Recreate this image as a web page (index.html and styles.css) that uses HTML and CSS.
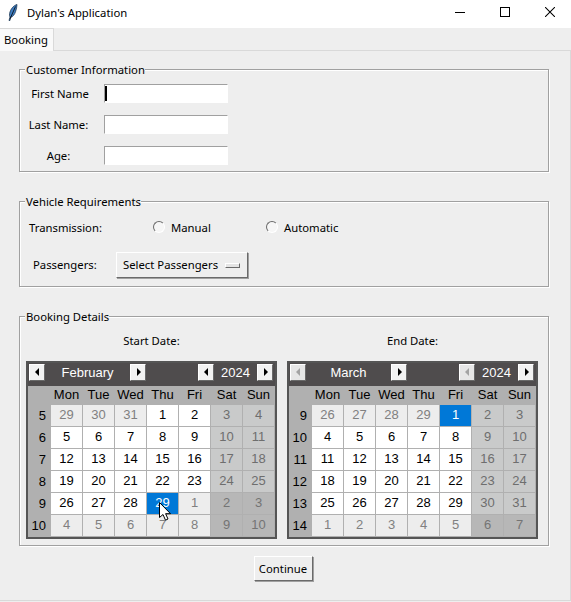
FILE: index.html
```html
<!DOCTYPE html>
<html lang="en">
<head>
  <meta charset="UTF-8" />
  <title>Dylan's Application</title>
  <link rel="stylesheet" href="styles.css">
</head>
<body>
  <div class="titlebar">
    <svg class="feather" width="10" height="17" viewBox="0 0 10 17">
      <path d="M9 0.5C5.5 1.5 2.5 5 1.6 9.5C1.3 11 1.5 12.3 2 13L1 16.5L1.8 16.7L2.9 13.2C5 12.6 6.6 10.6 7.6 7.5C8.4 5 9 2.5 9 0.5Z" fill="#3f7fc4" stroke="#10263f" stroke-width="0.7"/>
      <path d="M7.5 2.5L2.2 14.5" stroke="#000" stroke-width="0.8" fill="none"/>
    </svg>
    <span class="title">Dylan's Application</span>
    <div class="winbtns">
      <svg width="10" height="10" viewBox="0 0 10 10"><path d="M0 5.5H10" stroke="#000"/></svg>
      <svg width="10" height="10" viewBox="0 0 10 10"><rect x="0.5" y="0.5" width="9" height="9" fill="none" stroke="#000"/></svg>
      <svg width="10" height="10" viewBox="0 0 10 10"><path d="M0 0L10 10M10 0L0 10" stroke="#000" stroke-width="1.05"/></svg>
    </div>
  </div>

  <div class="tabs"><div class="tab">Booking</div></div>

  <div class="panel">
    <fieldset class="group customer">
      <legend>Customer Information</legend>
      <label class="first">First Name</label>
      <input type="text" class="focused" />
      <label>Last Name:</label>
      <input type="text" />
      <label>Age:</label>
      <input type="text" />
    </fieldset>

    <fieldset class="group vehicle">
      <legend>Vehicle Requirements</legend>
      <div class="row">
        <span class="trans-label">Transmission:</span>
        <span class="choice"><span class="radio"></span>Manual</span>
        <span class="choice"><span class="radio"></span>Automatic</span>
      </div>
      <div class="row passengers">
        <span class="pass-label">Passengers:</span>
        <div class="menubtn">Select Passengers<span class="indicator"></span></div>
      </div>
    </fieldset>

    <fieldset class="group booking">
      <legend>Booking Details</legend>
      <div class="dates">
        <div class="date-label">Start Date:</div>
        <div class="date-label">End Date:</div>

        <div class="cal">
          <div class="cal-head">
            <span class="arrow left"></span>
            <span class="month">February</span>
            <span class="arrow right"></span>
            <span class="arrow left push"></span>
            <span class="year">2024</span>
            <span class="arrow right"></span>
          </div>
          <div class="cal-body">
            <b></b><b>Mon</b><b>Tue</b><b>Wed</b><b>Thu</b><b>Fri</b><b>Sat</b><b>Sun</b>
            <i>5</i><span class="o">29</span><span class="o">30</span><span class="o">31</span><span>1</span><span>2</span><span class="w">3</span><span class="w">4</span>
            <i>6</i><span>5</span><span>6</span><span>7</span><span>8</span><span>9</span><span class="w">10</span><span class="w">11</span>
            <i>7</i><span>12</span><span>13</span><span>14</span><span>15</span><span>16</span><span class="w">17</span><span class="w">18</span>
            <i>8</i><span>19</span><span>20</span><span>21</span><span>22</span><span>23</span><span class="w">24</span><span class="w">25</span>
            <i>9</i><span>26</span><span>27</span><span>28</span><span class="sel">29</span><span class="o">1</span><span class="ow">2</span><span class="ow">3</span>
            <i>10</i><span class="o">4</span><span class="o">5</span><span class="o">6</span><span class="o">7</span><span class="o">8</span><span class="ow">9</span><span class="ow">10</span>
          </div>
          <svg class="pointer" width="13" height="19" viewBox="0 0 13 19">
            <path d="M0.5 0.5V15.5L4 12.5L6.5 18.2L9 17L6.6 11.7H11.5Z" fill="#fff" stroke="#000" stroke-width="1"/>
          </svg>
        </div>

        <div class="cal wide">
          <div class="cal-head">
            <span class="arrow left off"></span>
            <span class="month">March</span>
            <span class="arrow right"></span>
            <span class="arrow left off push"></span>
            <span class="year">2024</span>
            <span class="arrow right"></span>
          </div>
          <div class="cal-body">
            <b></b><b>Mon</b><b>Tue</b><b>Wed</b><b>Thu</b><b>Fri</b><b>Sat</b><b>Sun</b>
            <i>9</i><span class="o">26</span><span class="o">27</span><span class="o">28</span><span class="o">29</span><span class="sel">1</span><span class="w">2</span><span class="w">3</span>
            <i>10</i><span>4</span><span>5</span><span>6</span><span>7</span><span>8</span><span class="w">9</span><span class="w">10</span>
            <i>11</i><span>11</span><span>12</span><span>13</span><span>14</span><span>15</span><span class="w">16</span><span class="w">17</span>
            <i>12</i><span>18</span><span>19</span><span>20</span><span>21</span><span>22</span><span class="w">23</span><span class="w">24</span>
            <i>13</i><span>25</span><span>26</span><span>27</span><span>28</span><span>29</span><span class="w">30</span><span class="w">31</span>
            <i>14</i><span class="o">1</span><span class="o">2</span><span class="o">3</span><span class="o">4</span><span class="o">5</span><span class="ow">6</span><span class="ow">7</span>
          </div>
        </div>
      </div>
    </fieldset>

    <div class="actions"><button class="continue">Continue</button></div>
  </div>
</body>
</html>
```

FILE: styles.css
```css
* {
  box-sizing: border-box;
}
html, body {
  height: 100%;
}
body {
  margin: 0;
  width: 571px;
  height: 602px;
  overflow: hidden;
  background: #eeeeee;
  color: #000;
  font-family: "Noto Sans", sans-serif;
  font-size: 11.3px;
  line-height: 16px;
}

/* window title */
.titlebar {
  display: flex;
  align-items: center;
  height: 28px;
  padding-left: 8px;
  background: #fff;
}
.feather {
  margin-right: 9px;
  margin-top: -3px;
}
.title {
  margin-top: -2px;
}
.winbtns {
  display: flex;
  gap: 35px;
  margin-left: auto;
  margin-right: 16px;
  margin-top: -4px;
}

/* notebook */
.tabs {
  height: 23px;
  border-bottom: 1px solid #d9d9d9;
}
.tab {
  width: 54px;
  height: 23px;
  padding: 3px 0 0 4px;
  background: #f9f9f9;
  border: 1px solid #d9d9d9;
  border-width: 1px 1px 0 0;
}
.panel {
  height: 550px;
  padding: 11px 22px 0 19px;
  border-right: 1px solid #d9d9d9;
  border-bottom: 1px solid #d9d9d9;
  margin-bottom: 1px;
}

/* label frames */
.group {
  margin: 0;
  width: 530px;
  min-width: 0;
  padding: 0;
  border: 1px solid #a0a0a0;
  box-shadow: 1px 1px 0 #fff, inset 1px 1px 0 #fff;
}
.group legend {
  margin-left: 5px;
  padding: 0 0 0 1px;
  line-height: 15px;
  background: #eee;
}

.customer {
  display: grid;
  grid-template-columns: 77px 124px;
  column-gap: 7px;
  row-gap: 12px;
  align-items: center;
  padding: 7px 0 6px 0;
}
.customer label {
  text-align: center;
}
.customer .first {
  padding-left: 3px;
}
input {
  display: block;
  width: 124px;
  height: 19px;
  padding: 0;
  background: #fff;
  border: 1px solid #fff;
  border-top-color: #a0a0a0;
  border-left-color: #a0a0a0;
  outline: none;
}
.focused {
  background: linear-gradient(#000, #000) no-repeat 0 1px / 2px 15px #fff;
}

.vehicle {
  margin-top: 22px;
  padding: 9px 0 8px 9px;
}
.vehicle legend {
  margin-left: -4px;
}
.row {
  display: flex;
  align-items: center;
  height: 20px;
}
.trans-label {
  width: 124px;
}
.choice {
  display: flex;
  align-items: center;
  gap: 6px;
  width: 113px;
}
.radio {
  width: 12px;
  height: 12px;
  margin-top: -2px;
  border-radius: 50%;
  background: #f6f6f6;
  border: 1px solid #fff;
  border-top-color: #6a6a6a;
  border-left-color: #6a6a6a;
}
.passengers {
  height: 26px;
  margin-top: 14px;
}
.pass-label {
  width: 87px;
  padding-left: 4px;
}
.menubtn {
  display: flex;
  align-items: center;
  width: 132px;
  height: 26px;
  padding-left: 6px;
  background: #eee;
  border: 1px solid #fff;
  border-right-color: #6a6a6a;
  border-bottom-color: #6a6a6a;
  box-shadow: 1px 1px 0 #a0a0a0;
}
.indicator {
  width: 15px;
  height: 5px;
  margin-left: auto;
  margin-right: 7px;
  background: #e4e4e4;
  border: 1px solid #fff;
  border-right-color: #6a6a6a;
  border-bottom-color: #6a6a6a;
}

.booking {
  margin-top: 22px;
  padding: 9px 0 6px 6px;
}
.booking legend {
  margin-left: -1px;
}
.dates {
  display: grid;
  grid-template-columns: 251px 251px;
  column-gap: 10px;
}
.date-label {
  height: 16px;
  margin-bottom: 12px;
  text-align: center;
}

/* calendars */
.cal {
  position: relative;
  width: 251px;
  height: 178px;
  background: #4f4c4d;
  border: 2px solid #555;
  font-family: "Liberation Sans", Arial, sans-serif;
  font-size: 13px;
}
.cal-head {
  display: flex;
  align-items: flex-start;
  height: 23px;
  padding: 1px 0 0 1px;
  color: #fff;
}
.month {
  width: 85px;
  text-align: center;
  line-height: 17px;
}
.year {
  width: 43px;
  text-align: center;
  line-height: 17px;
}
.push {
  margin-left: 52px;
}
.arrow {
  position: relative;
  flex: none;
  width: 16px;
  height: 17px;
  background: #f2f2f2;
  border: 1px solid #fff;
  border-right-color: #6a6a6a;
  border-bottom-color: #6a6a6a;
}
.arrow::after {
  content: "";
  position: absolute;
  top: 3px;
  left: 5px;
  border: 4px solid transparent;
  border-left-width: 0;
  border-right: 4px solid #000;
}
.arrow.right::after {
  left: 6px;
  border-right-width: 0;
  border-left: 4px solid #000;
}
.arrow.off {
  background: #e6e6e6;
}
.arrow.off::after {
  border-right-color: #a3a3a3;
}
.cal-body {
  display: grid;
  grid-template-columns: 22px repeat(7, 31px);
  grid-template-rows: 18px repeat(6, 21px);
  gap: 1px;
  padding: 0 1px 1px 0;
  background: #b0b0b0;
}
.cal-body b,
.cal-body i,
.cal-body span {
  font-style: normal;
  font-weight: normal;
  line-height: 20px;
  text-align: center;
  background: #fff;
}
.cal-body b {
  line-height: 18px;
  background: #b0b0b0;
}
.cal-body i {
  padding-top: 1px;
  padding-right: 4px;
  text-align: right;
  background: #b0b0b0;
}
.cal-body .o {
  color: #808080;
  background: #ededed;
}
.cal-body .w {
  color: #6e6e6e;
  background: #c9caca;
}
.cal-body .ow {
  color: #747474;
  background: #b7b7b7;
}
.cal-body .sel {
  color: #fff;
  background: #0078d7;
}
.pointer {
  position: absolute;
  left: 131px;
  top: 139px;
}

/* bottom button */
.actions {
  display: flex;
  justify-content: center;
  margin-top: 10px;
  padding-right: 1px;
}
.continue {
  width: 59px;
  height: 25px;
  padding: 0;
  font: inherit;
  background: #eee;
  border: 1px solid #fff;
  border-right-color: #6a6a6a;
  border-bottom-color: #6a6a6a;
  box-shadow: 1px 1px 0 #a0a0a0;
}
```
